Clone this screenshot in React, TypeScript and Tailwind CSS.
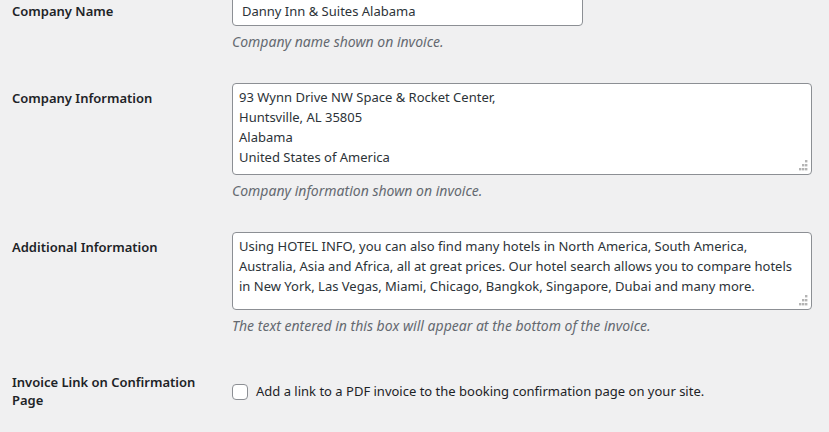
import React from 'react';

const font = { fontFamily: '"Noto Sans", "Open Sans", sans-serif' };

function Grip() {
  // little dotted resize handle, like the native one in the screenshot
  const dots = [
    [9, 1], [6, 5], [9, 5], [3, 9], [6, 9], [9, 9],
  ];
  return (
    <svg className="pointer-events-none absolute right-[3px] bottom-[3px]" width="12" height="12" viewBox="0 0 12 12">
      {dots.map(([x, y], i) => (
        <rect key={i} x={x - 1} y={y - 1} width="2.4" height="2.4" fill="#b4b4b4" />
      ))}
    </svg>
  );
}

function Description({ children }: { children: React.ReactNode }) {
  return <p className="mt-[5px] text-[14px] leading-[21px] italic text-[#646970]">{children}</p>;
}

function Row({ label, children, tdPad = 'pt-[15px]' }: { label: React.ReactNode; children: React.ReactNode; tdPad?: string }) {
  return (
    <div className="flex pb-[16px]">
      <div className="w-[210px] shrink-0 pr-[10px] pt-[21px] text-[13px] leading-[18px] font-semibold text-[#1d2327]">
        {label}
      </div>
      <div className={`flex-1 pl-[10px] pr-[17px] ${tdPad}`}>{children}</div>
    </div>
  );
}

function Area({ value, height }: { value: string; height: string }) {
  return (
    <div className="relative">
      <textarea
        readOnly
        value={value}
        style={font}
        className={`block w-full ${height} resize-none overflow-hidden whitespace-pre rounded-[4px] border border-[#8c8f94] bg-white px-[6px] pt-[3px] text-[13px] leading-[20px] text-[#2c3338] outline-none`}
      />
      <Grip />
    </div>
  );
}

export default function App() {
  return (
    <div className="min-h-screen overflow-hidden bg-[#f0f0f1]" style={font}>
      <div className="-mt-[19px] pl-[12px]">
        <Row label="Company Name">
          <input
            readOnly
            value="Danny Inn & Suites Alabama"
            style={font}
            className="block h-[30px] w-[351px] rounded-[4px] border border-[#8c8f94] bg-white px-[9px] text-[13px] text-[#2c3338] outline-none"
          />
          <Description>Company name shown on invoice.</Description>
        </Row>

        <Row label="Company Information">
          <Area
            height="h-[92px]"
            value={'93 Wynn Drive NW Space & Rocket Center,\nHuntsville, AL 35805\nAlabama\nUnited States of America'}
          />
          <Description>Company information shown on invoice.</Description>
        </Row>

        <Row label="Additional Information">
          <Area
            height="h-[78px]"
            value={
              'Using HOTEL INFO, you can also find many hotels in North America, South America,\nAustralia, Asia and Africa, all at great prices. Our hotel search allows you to compare hotels\nin New York, Las Vegas, Miami, Chicago, Bangkok, Singapore, Dubai and many more.'
            }
          />
          <Description>The text entered in this box will appear at the bottom of the invoice.</Description>
        </Row>

        <Row label={<>Invoice Link on Confirmation<br />Page</>} tdPad="pt-[30px]">
          <label className="flex h-[20px] items-center gap-[8px] text-[13px] text-[#1d2327]">
            <span className="block h-[16px] w-[16px] shrink-0 rounded-[4px] border border-[#8c8f94] bg-white" />
            Add a link to a PDF invoice to the booking confirmation page on your site.
          </label>
        </Row>
      </div>
    </div>
  );
}
